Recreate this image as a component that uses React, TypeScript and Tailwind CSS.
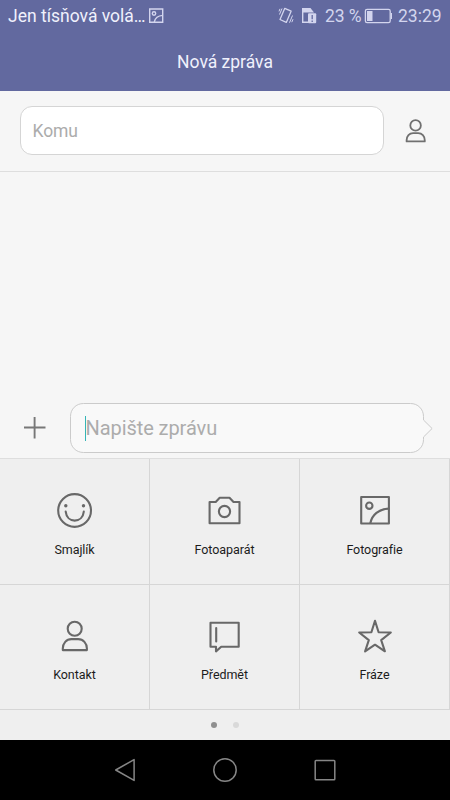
import type { ReactNode } from "react";

function PersonShape() {
  return (
    <>
      <circle cx="74.7" cy="628.8" r="7" />
      <path d="M62.8 650.1v-1.6c0-5.2 3.6-9.4 8.6-9.4h6.8c5 0 8.7 4.2 8.7 9.4v1.6z" />
    </>
  );
}

function Cell({ label, box, children }: { label: string; box: string; children: ReactNode }) {
  return (
    <div className="group flex flex-col items-center border-r border-b border-[#d6d6d6] pt-[31px]">
      <svg
        className="h-[41px] w-[41px] shrink-0"
        viewBox={box}
        fill="none"
        stroke="#686868"
        strokeWidth="2.1"
        strokeLinejoin="round"
        strokeLinecap="round"
      >
        {children}
      </svg>
      <span className="mt-[10px] text-[12.5px] leading-[18px] tracking-[-0.06px] whitespace-nowrap text-[#1c1c1c] group-nth-[n+4]:mt-[9px]">
        {label}
      </span>
    </div>
  );
}

export default function App() {
  return (
    <div className="flex h-[800px] w-[450px] flex-col overflow-hidden bg-[#f6f6f6] font-['Roboto','Noto_Sans',sans-serif]">
      <header className="h-[91px] shrink-0 bg-[#62699f]">
        <div className="flex h-8 items-center pl-2 text-[#d3d5ee]">
          <span className="w-[137px] text-[17.5px] leading-8 whitespace-nowrap text-[#f0f1fc]">Jen tísňová volá…</span>
          <svg className="ml-[3px] h-4 w-4" viewBox="148 8 16 16" fill="none" stroke="currentColor" strokeWidth="1.4">
            <path d="M149.7 9h13v13.3h-13z" />
            <circle cx="154" cy="13.5" r="1.7" />
            <path d="M154.3 22c.8-4 4-6.3 8.4-6.6" />
          </svg>
          <svg className="ml-[114px] h-[18px] w-4" viewBox="278 7 16 18" fill="none" stroke="currentColor" strokeWidth="1.3">
            <path d="m284.8 8.3 6.3 2.9-4.8 11.2-6.3-2.9z" strokeLinejoin="round" />
            <path d="m282 8.5-2.5 6M280 8.8l-1 2.6M292.5 15.5l-3 7.2M293 19.2l-1.2 3" strokeWidth="1" />
          </svg>
          <svg className="ml-[7px] h-[18px] w-4" viewBox="301 7 16 18">
            <path d="M302 8h8.5l3.5 4.5H302z" fill="currentColor" />
            <path d="M302.7 11v11.2h6" fill="none" stroke="currentColor" strokeWidth="1.4" />
            <rect x="308" y="13.3" width="8.2" height="10" rx="1" fill="currentColor" />
            <path d="M312.2 15v4.3m0 1.3v1.4" stroke="#62699f" strokeWidth="1.3" />
          </svg>
          <span className="ml-2 w-10 text-[17.5px] leading-8 tracking-[-0.1px] whitespace-nowrap">23 %</span>
          <svg className="-ml-px h-4 w-7" viewBox="364 8 28 16" fill="none" stroke="currentColor" strokeWidth="1.3">
            <rect x="365.4" y="9.4" width="24.8" height="13.2" rx="1.7" />
            <path d="M391.4 13v6" />
            <path d="M367 11h5.5v10H367z" fill="currentColor" stroke="none" />
          </svg>
          <span className="ml-[6px] text-[17.5px] leading-8">23:29</span>
        </div>
        <h1 className="text-center text-[17.5px] leading-[60px] font-normal text-[#f0f1fc]">Nová zpráva</h1>
      </header>

      <div className="flex h-[81px] shrink-0 items-start border-b border-[#dedede] pt-[15px] pl-5">
        <div className="flex h-[49px] w-[364px] items-center rounded-xl border border-[#d5d5d5] bg-white pt-[2px] pl-[11.5px] text-[17.5px] tracking-[-0.1px] text-[#acacac]">
          Komu
        </div>
        <svg
          className="mt-[12px] ml-[19px] h-[29px] w-[25px]"
          viewBox="58 619 33.2 38.5"
          fill="none"
          stroke="#707070"
          strokeWidth="2.4"
          strokeLinejoin="round"
        >
          <PersonShape />
        </svg>
      </div>

      <main className="flex-1" />

      <div className="flex h-[56px] shrink-0 items-start">
        <svg className="mt-[14px] ml-[23px] h-[23px] w-[23px]" viewBox="0 0 23 23" stroke="#777" strokeWidth="1.9">
          <path d="M1 11.5h21.5M11.6 1v21.5" />
        </svg>
        <div className="relative ml-6 h-[51px] w-[364px]">
          <svg className="absolute inset-0 h-[51px] w-[364px]" viewBox="70 402 364 51" fill="#f9f9f9" stroke="#cbcbcb">
            <path d="M83.5 403.5h327c7.4 0 13 5.6 13 13v3.5l8.6 8.5-8.6 8.5v2.5c0 7.4-5.6 13-13 13h-327c-7.4 0-13-5.6-13-13v-23c0-7.4 5.6-13 13-13z" />
          </svg>
          <div className="relative flex h-[51px] items-center pl-[15px] pt-px">
            <div className="h-[25px] w-px bg-[#35b5b7]" />
            <span className="-ml-[0.5px] text-[20px] leading-[26px] tracking-[-0.07px] text-[#acacac]">Napište zprávu</span>
          </div>
        </div>
      </div>

      <section className="shrink-0 bg-[#efefef]">
        <div className="grid grid-cols-3 grid-rows-[126px_125px] border-t border-[#dedede]">
          <Cell label="Smajlík" box="54 490 41 41">
            <circle cx="74.6" cy="510.5" r="16.4" />
            <circle cx="65.8" cy="505.8" r="1.7" fill="#686868" stroke="none" />
            <circle cx="83.5" cy="505.8" r="1.7" fill="#686868" stroke="none" />
            <path d="M65.7 511.6c.6 5.4 4 9 9 9s8.5-3.6 9.1-9" />
          </Cell>
          <Cell label="Fotoaparát" box="204 490 41 41">
            <path d="M209.6 502h6.1l4-4.2h9.8l4 4.2h6v21.2h-29.9z" />
            <circle cx="224.5" cy="511.5" r="5.6" />
          </Cell>
          <Cell label="Fotografie" box="354 490 41 41">
            <path d="M361.2 497h27.7v26.5h-27.7z" />
            <circle cx="369.3" cy="505.7" r="3.2" />
            <path d="M370.4 523c1.6-8.2 8.5-14 18.2-14.4" />
          </Cell>
          <Cell label="Kontakt" box="54 616 41 41">
            <PersonShape />
          </Cell>
          <Cell label="Předmět" box="204 616 41 41">
            <path d="M210.5 622.8h28.2v24h-17.5l-5.2 4.6v-4.6h-5.5z" />
            <path d="M216.2 628v13.5" />
          </Cell>
          <Cell label="Fráze" box="354 616 41 41">
            <path d="m375 620.8 3.6 11.5 12.2.2-9.6 7.6 3.7 11.2-9.9-6.6-9.9 6.6 3.7-11.2-9.6-7.6 12.2-.2z" />
          </Cell>
        </div>
        <div className="flex h-[30px] items-center justify-center gap-4">
          <i className="h-1.5 w-1.5 rounded-full bg-[#8f8f8f]" />
          <i className="h-1.5 w-1.5 rounded-full bg-[#d9d9d9]" />
        </div>
      </section>

      <nav className="flex h-[60px] shrink-0 items-center justify-between bg-black px-[113px]">
        <svg className="h-6 w-6" viewBox="113 758 24 24" fill="none" stroke="#868686" strokeWidth="1.5" strokeLinejoin="round">
          <path d="m115.7 770 18.4-10.4v20.8z" />
        </svg>
        <svg className="h-6 w-6" viewBox="213 758 24 24" fill="none" stroke="#868686" strokeWidth="1.5">
          <circle cx="225" cy="770" r="11.2" />
        </svg>
        <svg className="h-6 w-6" viewBox="313 758 24 24" fill="none" stroke="#868686" strokeWidth="1.5">
          <rect x="315.2" y="760.4" width="19.6" height="19.4" rx=".8" />
        </svg>
      </nav>
    </div>
  );
}
